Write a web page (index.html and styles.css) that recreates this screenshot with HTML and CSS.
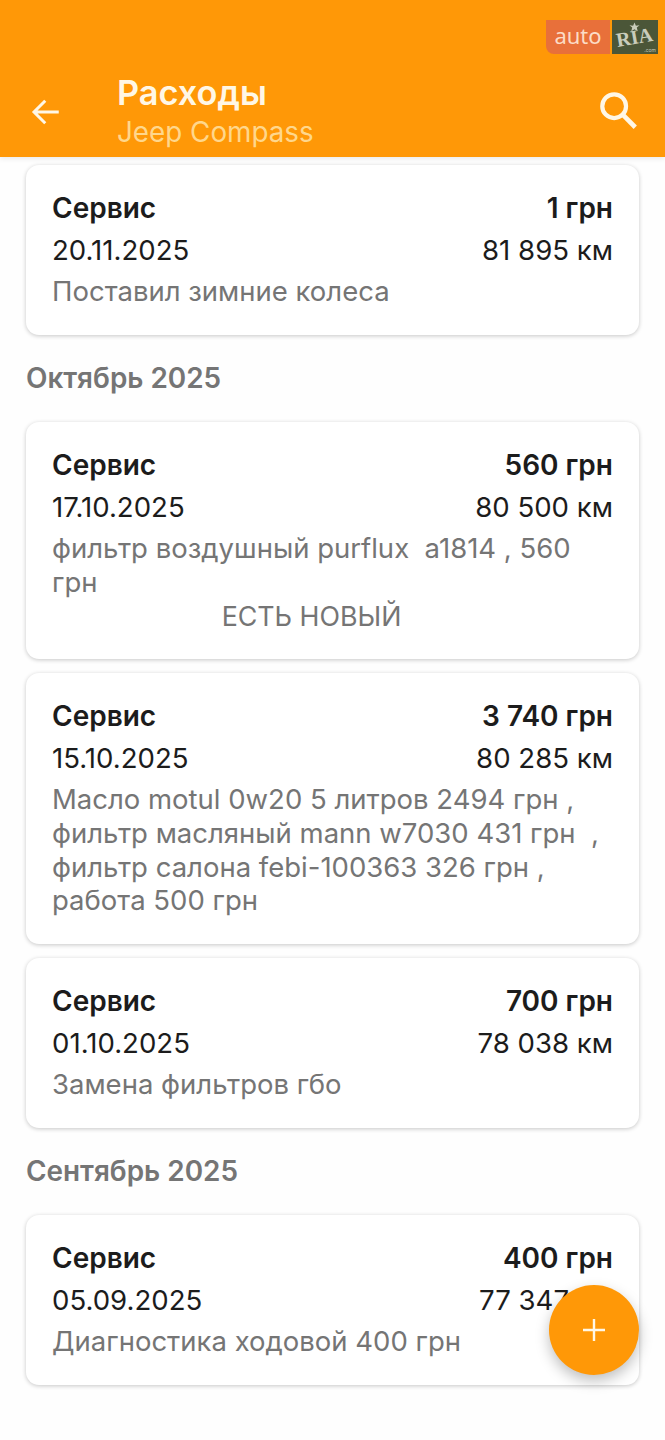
FILE: index.html
```html
<!DOCTYPE html>
<html lang="ru">
<head>
    <meta charset="UTF-8">
    <meta name="viewport" content="width=device-width, initial-scale=1.0">
    <title>Расходы</title>
    <link rel="stylesheet" href="styles.css">
</head>
<body>
    <header class="app-bar">
        <div class="logo">
            <div class="logo-auto">auto</div>
            <div class="logo-ria">
                <svg class="logo-star" viewBox="0 0 24 24"><path d="M12 1l3 7 8-1-6 5 2 8-7-4-7 4 2-8-6-5 8 1z"/></svg>
                <span class="logo-ria-text">RIA</span>
                <span class="logo-com">.com</span>
            </div>
        </div>
        <div class="toolbar">
            <button class="icon-btn back-btn" type="button">
                <svg viewBox="0 0 24 24" width="36" height="36"><path d="M20.5 12H4.5M11.5 4.5L4 12l7.5 7.5" fill="none" stroke="currentColor" stroke-width="2"/></svg>
            </button>
            <div class="titles">
                <div class="title">Расходы</div>
                <div class="subtitle">Jeep Compass</div>
            </div>
            <button class="icon-btn search-btn" type="button">
                <svg viewBox="0 0 24 24" width="46" height="46"><circle cx="10" cy="10" r="6.2" fill="none" stroke="currentColor" stroke-width="2.2"/><path d="M14.6 14.6l6.4 6.4" fill="none" stroke="currentColor" stroke-width="2.4"/></svg>
            </button>
        </div>
    </header>

    <main class="list">
        <div class="card">
            <div class="row title-row"><span>Сервис</span><span>1 грн</span></div>
            <div class="row"><span>20.11.2025</span><span>81 895 км</span></div>
            <div class="desc">Поставил зимние колеса</div>
        </div>

        <h2 class="month">Октябрь 2025</h2>

        <div class="card">
            <div class="row title-row"><span>Сервис</span><span>560 грн</span></div>
            <div class="row"><span>17.10.2025</span><span>80 500 км</span></div>
            <div class="desc">фильтр воздушный purflux&nbsp; a1814 , 560<br>грн<span class="desc-center">ЕСТЬ НОВЫЙ</span></div>
        </div>
        <div class="card">
            <div class="row title-row"><span>Сервис</span><span>3 740 грн</span></div>
            <div class="row"><span>15.10.2025</span><span>80 285 км</span></div>
            <div class="desc">Масло motul 0w20 5 литров 2494 грн ,<br>фильтр масляный mann w7030 431 грн&nbsp; ,<br>фильтр салона febi-100363 326 грн ,<br>работа 500 грн</div>
        </div>
        <div class="card">
            <div class="row title-row"><span>Сервис</span><span>700 грн</span></div>
            <div class="row"><span>01.10.2025</span><span>78 038 км</span></div>
            <div class="desc">Замена фильтров гбо</div>
        </div>

        <h2 class="month">Сентябрь 2025</h2>

        <div class="card">
            <div class="row title-row"><span>Сервис</span><span>400 грн</span></div>
            <div class="row"><span>05.09.2025</span><span>77 347 км</span></div>
            <div class="desc">Диагностика ходовой 400 грн</div>
        </div>
    </main>

    <button class="fab" type="button">
        <svg viewBox="0 0 24 24" width="24" height="24"><path d="M12 1v22M1 12h22" fill="none" stroke="currentColor" stroke-width="2.4"/></svg>
    </button>
</body>
</html>
```

FILE: styles.css
```css
* {
    box-sizing: border-box;
}

html, body {
    height: 100%;
}

body {
    margin: 0;
    font-family: Inter, Roboto, sans-serif;
    background-color: #fefefe;
    color: #1c1c1c;
    overflow: hidden;
    position: relative;
}

.app-bar {
    height: 157px;
    background-color: #ff9807;
    position: relative;
    box-shadow: 0 2px 5px rgba(0, 0, 0, 0.08);
    display: flex;
    flex-direction: column;
    justify-content: flex-end;
}

.toolbar {
    display: flex;
    align-items: center;
    height: 90px;
    padding: 0 24px 0 28px;
    color: #fff;
}

.icon-btn {
    background: none;
    border: none;
    padding: 0;
    color: #fff7e6;
    display: flex;
}

.back-btn {
    margin-right: 53px;
}

.search-btn {
    margin-left: auto;
    margin-bottom: 4px;
}

.title {
    font-size: 34.3px;
    font-weight: 600;
    line-height: 40px;
    color: #fff7e6;
}

.subtitle {
    font-size: 27.8px;
    line-height: 38px;
    color: #ffd78c;
}

.logo {
    position: absolute;
    top: 20px;
    right: 7px;
    display: flex;
    gap: 2px;
    height: 34px;
}

.logo-auto {
    width: 64px;
    background-color: #e8703a;
    border-radius: 0 0 0 8px;
    color: #fcdcc6;
    font-size: 22px;
    line-height: 31px;
    text-align: center;
    font-family: "Noto Sans", sans-serif;
}

.logo-ria {
    width: 46px;
    background-color: #4b5638;
    position: relative;
    overflow: hidden;
}

.logo-star {
    position: absolute;
    top: 2px;
    left: 15px;
    width: 15px;
    height: 11px;
    fill: #c9ccbb;
}

.logo-ria-text {
    position: absolute;
    top: 8px;
    left: 4px;
    font-family: "Liberation Serif", serif;
    font-weight: 700;
    font-size: 20px;
    line-height: 18px;
    color: #c9ccbb;
    transform: rotate(-10deg);
}

.logo-com {
    position: absolute;
    right: 2px;
    bottom: 1px;
    font-size: 5px;
    line-height: 6px;
    color: #c9ccbb;
}

.list {
    padding: 8px 26px 0;
}

.card {
    background: #fff;
    border-radius: 13px;
    padding: 22px 26px;
    margin-bottom: 14px;
    box-shadow: 0 1px 4px rgba(0, 0, 0, 0.22);
}

.row {
    display: flex;
    justify-content: space-between;
    font-size: 27.6px;
    line-height: 42px;
}

.title-row {
    font-size: 28px;
    font-weight: 600;
}

.desc {
    margin: 4px 0;
    font-size: 27.5px;
    line-height: 33.7px;
    color: #757575;
}

.desc-center {
    display: block;
    text-align: center;
    padding-right: 42px;
    font-size: 26.8px;
}

.month {
    margin: 0 0 14.5px;
    height: 59px;
    font-size: 27.9px;
    font-weight: 600;
    line-height: 59px;
    color: #757575;
}

.fab {
    position: absolute;
    top: 1285px;
    left: 549px;
    width: 90px;
    height: 90px;
    border: none;
    border-radius: 50%;
    padding: 0;
    background-color: #ff9807;
    color: #fff7e6;
    display: flex;
    align-items: center;
    justify-content: center;
    box-shadow: 0 6px 14px rgba(0, 0, 0, 0.25);
}
```
